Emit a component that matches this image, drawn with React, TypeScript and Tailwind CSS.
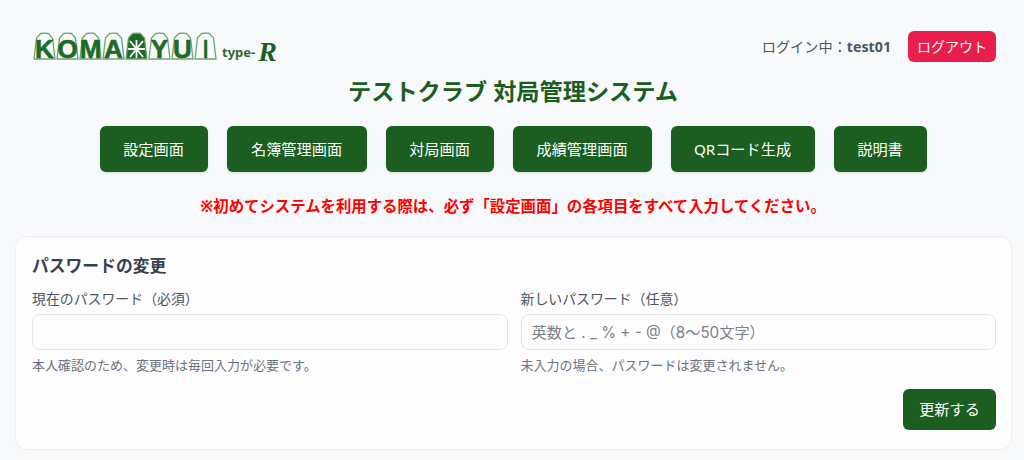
const NAV_ITEMS = [
  { label: '設定画面', width: 'w-[108px]' },
  { label: '名簿管理画面', width: 'w-[140px]' },
  { label: '対局画面', width: 'w-[108px]' },
  { label: '成績管理画面', width: 'w-[139px]' },
  { label: 'QRコード生成', width: 'w-[144px]' },
  { label: '説明書', width: 'w-[93px]' },
]

const LOGO_LETTERS = ['K', 'O', 'M', 'A', '', 'Y', 'U', 'I']

const PIECE_PATH = 'M7.5 1.5 Q11.5 0.8 15.5 1.5 L19.5 6 L22 27 L1 27 L3.5 6 Z'

function LogoPiece({ letter }: { letter: string }) {
  // the fifth piece has no letter, it is a solid piece with a white cross
  const solid = letter === ''
  return (
    <svg width="23" height="31" viewBox="0 0 23 31" className="shrink-0">
      <path d={PIECE_PATH} fill={solid ? '#1f6b25' : 'none'} stroke="#6ea572" strokeWidth="1.3" />
      {solid ? (
        <path d="M5 9 L18 25 M18 9 L5 25 M11.5 8 L11.5 26 M3 17 L20 17" stroke="#f7f9fb" strokeWidth="1.8" />
      ) : (
        <text
          x="11.5"
          y="26"
          textAnchor="middle"
          fontFamily="'Liberation Sans', sans-serif"
          fontWeight={letter === 'I' ? 400 : 700}
          fontSize="26"
          fill="#1f6b25"
          stroke="#1f6b25"
          strokeWidth="0.6"
        >
          {letter}
        </text>
      )}
    </svg>
  )
}

function Logo() {
  return (
    <div className="flex items-start">
      {LOGO_LETTERS.map((l, i) => (
        <LogoPiece key={i} letter={l} />
      ))}
      <span className="mt-[9px] ml-[5px] text-[13px] leading-[22px] font-bold text-[#2f6b33]">type-</span>
      <span className="mt-[3px] ml-[3px] font-['Liberation_Serif',serif] text-[28px] leading-[34px] font-bold italic text-[#1b5e20]">R</span>
    </div>
  )
}

function Field({ label, placeholder, hint }: { label: string; placeholder?: string; hint: string }) {
  return (
    <div className="flex-1">
      <label className="block text-[13.9px] leading-[20px] text-[#4b5563]">{label}</label>
      <input
        type="text"
        placeholder={placeholder}
        className="mt-[5px] block h-[36px] w-full rounded-lg border border-[#e2e5ea] bg-[#fdfdfe] px-[10px] font-['Inter','Noto_Sans_CJK_JP',sans-serif] text-[15.2px] placeholder:text-[#7b818b]"
      />
      <p className="mt-[6px] text-[13px] leading-[18px] text-[#6b7280]">{hint}</p>
    </div>
  )
}

export default function App() {
  return (
    <div className="h-[460px] w-[1024px] overflow-hidden bg-[#f7f9fb] pr-[12px] pl-[15px] font-['Noto_Sans','Noto_Sans_CJK_JP',sans-serif]">
      {/* Header */}
      <div className="flex h-[78px] items-start justify-between pt-[32px] pr-[16px] pl-[18px]">
        <Logo />
        <div className="-mt-px flex items-center gap-[17px]">
          <span className="text-[14.2px] text-[#4b5563]">
            ログイン中：<span className="font-bold">test01</span>
          </span>
          <button className="h-[31px] w-[88px] rounded-md bg-[#e91e4d] text-[14px] text-white">ログアウト</button>
        </div>
      </div>

      <h1 className="-mt-[3px] pr-px text-center text-[23.2px] leading-[32px] font-bold text-[#1b5e20]">
        テストクラブ 対局管理システム
      </h1>

      {/* Nav */}
      <nav className="mt-[19px] flex justify-center gap-[19px] pr-px">
        {NAV_ITEMS.map((item) => (
          <button
            key={item.label}
            className={`h-[46px] rounded-md bg-[#1b5e20] text-[15.2px] text-white shadow-sm ${item.width}`}
          >
            {item.label}
          </button>
        ))}
      </nav>

      <p className="mt-[24px] pr-px text-center text-[15.4px] leading-[22px] font-bold text-[#ff0000]">
        ※初めてシステムを利用する際は、必ず「設定画面」の各項目をすべて入力してください。
      </p>

      {/* Password form */}
      <section className="mt-[18px] h-[214px] rounded-xl border border-[#eceef2] bg-[#fdfdfe] pt-[17px] pr-[15px] pl-[16px]">
        <h2 className="text-[16.8px] leading-[24px] font-bold text-[#374151]">パスワードの変更</h2>
        <div className="mt-[11px] flex gap-[13px]">
          <Field label="現在のパスワード（必須）" hint="本人確認のため、変更時は毎回入力が必要です。" />
          <Field
            label="新しいパスワード（任意）"
            placeholder="英数と . _ % + - @（8〜50文字）"
            hint="未入力の場合、パスワードは変更されません。"
          />
        </div>
        <div className="mt-[15px] flex justify-end">
          <button className="h-[41px] w-[93px] rounded-md bg-[#1b5e20] text-[15.2px] text-white">更新する</button>
        </div>
      </section>
    </div>
  )
}
